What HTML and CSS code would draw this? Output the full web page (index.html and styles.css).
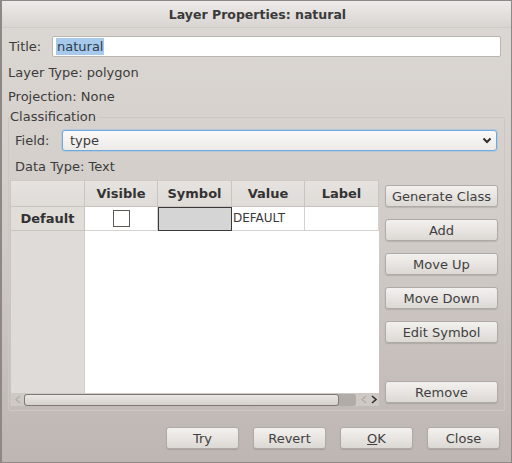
FILE: index.html
```html
<!DOCTYPE html>
<html>
<head>
<meta charset="utf-8">
<link rel="stylesheet" href="styles.css">
</head>
<body>
<div class="window">
  <div class="titlebar">Layer Properties: natural</div>
  <div class="content">
    <div class="title-row">
      <span class="lbl-title">Title:</span>
      <div class="textinput"><span class="sel">natural</span></div>
    </div>
    <div class="info">Layer Type: polygon</div>
    <div class="info">Projection: None</div>
    <fieldset class="group">
      <legend>Classification</legend>
      <div class="field-row">
        <span class="lbl-field">Field:</span>
        <div class="combo">
          <span class="combo-text">type</span>
          <svg class="combo-arrow" width="10" height="7" viewBox="0 0 10 7"><path d="M1.5 1.5 L5 5 L8.5 1.5" fill="none" stroke="#2e2e2e" stroke-width="2"/></svg>
        </div>
      </div>
      <div class="datatype">Data Type: Text</div>
      <div class="main">
        <div class="tableview">
          <div class="grid">
            <div class="hcorner"></div>
            <div class="hcell">Visible</div>
            <div class="hcell">Symbol</div>
            <div class="hcell">Value</div>
            <div class="hcell">Label</div>
            <div class="vhead">Default</div>
            <div class="cell center"><span class="check"></span></div>
            <div class="cell sym"></div>
            <div class="cell value">DEFAULT</div>
            <div class="cell"></div>
            <div class="vfill"></div>
            <div class="bfill"></div>
          </div>
          <div class="hscroll">
            <svg class="arr" width="8" height="9" viewBox="0 0 8 9"><path d="M6 1 L2 4.5 L6 8" fill="none" stroke="#b3ada9" stroke-width="1.3"/></svg>
            <div class="trough"><div class="slider"></div></div>
            <div class="arrows">
              <svg width="8" height="9" viewBox="0 0 8 9"><path d="M6 1 L2 4.5 L6 8" fill="none" stroke="#b3ada9" stroke-width="1.3"/></svg>
              <svg width="8" height="9" viewBox="0 0 8 9"><path d="M2 1 L6 4.5 L2 8" fill="none" stroke="#2e2e2e" stroke-width="1.6"/></svg>
            </div>
          </div>
        </div>
        <div class="btncol">
          <button class="btn">Generate Class</button>
          <button class="btn">Add</button>
          <button class="btn">Move Up</button>
          <button class="btn">Move Down</button>
          <button class="btn">Edit Symbol</button>
          <button class="btn remove">Remove</button>
        </div>
      </div>
    </fieldset>
    <div class="footer">
      <button class="btn fbtn">Try</button>
      <button class="btn fbtn">Revert</button>
      <button class="btn fbtn"><u>O</u>K</button>
      <button class="btn fbtn">Close</button>
    </div>
  </div>
</div>
</body>
</html>
```
FILE: styles.css
```css
html, body {
  margin: 0;
  padding: 0;
}
.window {
  width: 512px;
  height: 463px;
  box-sizing: border-box;
  border: 1px solid #8d8885;
  border-left-width: 2px;
  background: linear-gradient(#dcd8d4 0%, #d2ccc8 50%, #bdb6b2 100%);
  font-family: "DejaVu Sans", sans-serif;
  font-size: 13px;
  color: #3c3c3c;
  display: flex;
  flex-direction: column;
  overflow: hidden;
}
.titlebar {
  height: 27px;
  flex: none;
  background: linear-gradient(#edebe9, #d8d4d1);
  border-bottom: 1px solid #d0cbc7;
  display: flex;
  align-items: center;
  justify-content: center;
  font-weight: bold;
  font-size: 12.5px;
  color: #3a3a3a;
  box-sizing: border-box;
  padding-left: 2px;
}
.content {
  flex: 1;
  display: flex;
  flex-direction: column;
  padding: 8px 10px 0 6px;
}
.title-row {
  display: flex;
  align-items: center;
  height: 21px;
}
.lbl-title {
  width: 43px;
  padding-left: 1px;
}
.textinput {
  flex: 1;
  height: 21px;
  box-sizing: border-box;
  background: #fff;
  border: 1px solid #bab5b1;
  border-radius: 2px;
  display: flex;
  align-items: center;
  padding-left: 3px;
}
.sel {
  background: #a7c9ec;
  color: #2d3b4a;
  line-height: 17px;
  padding: 0 1px;
}
.info {
  line-height: 24px;
}
.title-row + .info {
  margin-top: 4px;
}
.group {
  margin: 0 -4px 0 0;
  padding: 0 0 4px 1px;
  border: 1px solid #cdc7c3;
  border-radius: 2px;
  min-width: 0;
}
.group legend {
  padding: 0 2px 0 0;
  line-height: 16px;
  margin-left: 0;
}
.field-row {
  display: flex;
  align-items: center;
  margin-top: 5px;
  height: 21px;
  padding-right: 7px;
}
.lbl-field {
  padding-left: 5px;
  width: 47px;
}
.combo {
  flex: 1;
  height: 21px;
  box-sizing: border-box;
  border: 1px solid #71a9dc;
  border-radius: 3px;
  background: linear-gradient(#fbfaf9, #edeae8);
  box-shadow: 0 0 0 1px rgba(140, 190, 235, 0.45);
  display: flex;
  align-items: center;
  padding: 0 4px 0 7px;
}
.combo-text {
  flex: 1;
}
.datatype {
  margin-top: 8px;
  line-height: 16px;
  padding-left: 5px;
}
.main {
  display: flex;
  margin-top: 5px;
  gap: 6px;
}
.tableview {
  width: 369px;
  height: 226px;
  display: flex;
  flex-direction: column;
  border-left: 1px solid #cbc5c1;
  box-sizing: border-box;
}
.grid {
  flex: 1;
  display: grid;
  grid-template-columns: 74px 73px 74px 73px 74px;
  grid-template-rows: 27px 24px 1fr;
  background: #fff;
}
.hcorner, .hcell {
  background: linear-gradient(#e6e2df, #dfdbd7);
  border-right: 1px solid #c9c4c0;
  border-bottom: 1px solid #c9c4c0;
  border-top: 1px solid #cfcac6;
}
.hcell {
  font-weight: bold;
  display: flex;
  align-items: center;
  justify-content: center;
  color: #333;
}
.vhead {
  background: #e1ddd9;
  border-right: 1px solid #c9c4c0;
  border-bottom: 1px solid #c9c4c0;
  font-weight: bold;
  display: flex;
  align-items: center;
  justify-content: center;
  color: #333;
}
.cell {
  border-right: 1px solid #d4d1ce;
  border-bottom: 1px solid #d4d1ce;
}
.center {
  display: flex;
  align-items: center;
  justify-content: center;
}
.check {
  width: 15px;
  height: 15px;
  border: 1px solid #5c5854;
  background: #fff;
}
.sym {
  background: #d5d5d5;
  border: 1px solid #3a3a3a;
}
.value {
  font-size: 12px;
  display: flex;
  align-items: center;
  padding-left: 1px;
  padding-bottom: 2px;
  color: #3a3a3a;
}
.vfill {
  background: #dfdbd8;
  border-right: 1px solid #d2ceca;
}
.bfill {
  grid-column: 2 / 6;
  background: #fff;
}
.hscroll {
  height: 13px;
  flex: none;
  background: #cfc9c5;
  display: flex;
  align-items: center;
}
.arr {
  margin: 0 2px 0 3px;
}
.trough {
  width: 332px;
  height: 12px;
  background: #b2aca8;
  border-radius: 3px;
  box-sizing: border-box;
  display: flex;
}
.slider {
  width: 315px;
  height: 12px;
  box-sizing: border-box;
  border: 1px solid #7f7975;
  border-radius: 3px;
  background: linear-gradient(#eae7e4, #d6d1cd);
}
.arrows {
  display: flex;
  gap: 2px;
  margin-left: 4px;
}
.btncol {
  display: flex;
  flex-direction: column;
  gap: 12px;
  padding-top: 5px;
  padding-bottom: 3px;
  width: 113px;
}
.btn {
  font-family: "DejaVu Sans", sans-serif;
  font-size: 13px;
  color: #404040;
  height: 22px;
  box-sizing: border-box;
  background: linear-gradient(#f3f1ef, #dcd8d4);
  border: 1px solid #b0aaa6;
  border-radius: 3px;
  box-shadow: 0 1px 1px rgba(0, 0, 0, 0.12);
  padding: 0;
  margin: 0;
}
.remove {
  margin-top: auto;
}
.footer {
  display: flex;
  justify-content: flex-end;
  gap: 14px;
  margin-top: 16px;
  padding-right: 1px;
}
.fbtn {
  width: 73px;
}
```
